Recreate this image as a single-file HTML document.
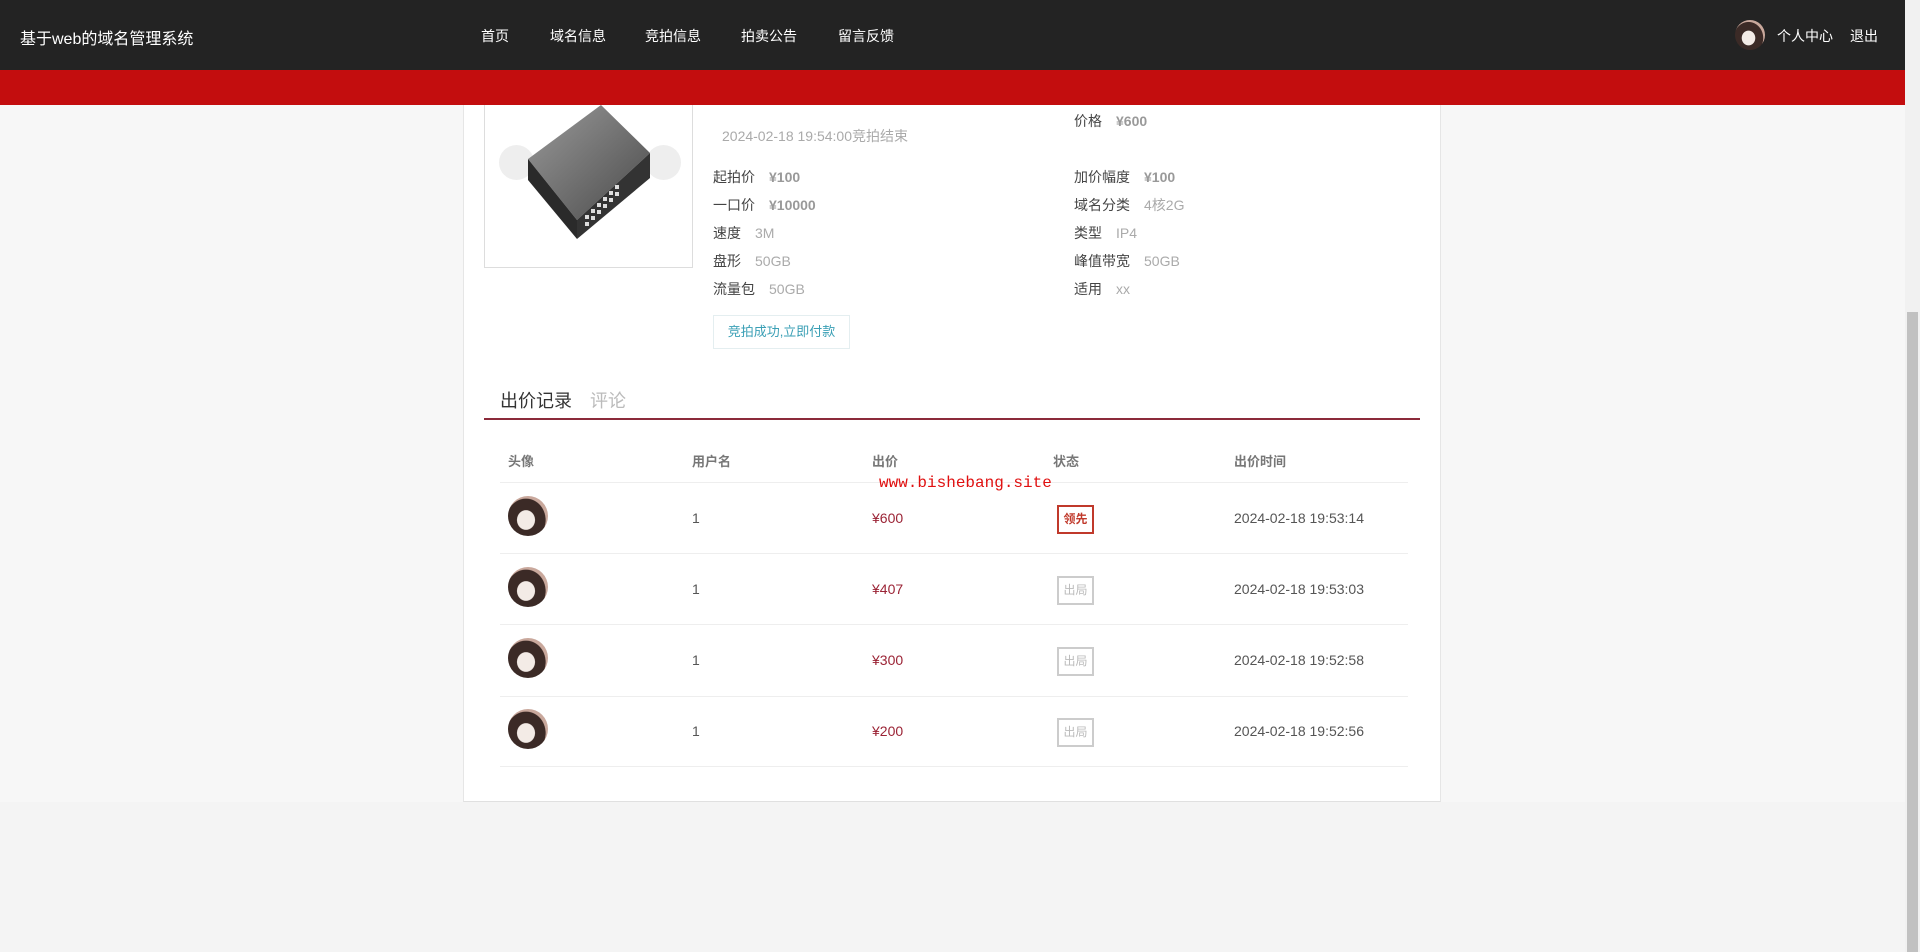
<!DOCTYPE html>
<html><head><meta charset="utf-8"><style>
*{margin:0;padding:0;box-sizing:border-box}
body{width:1920px;height:952px;overflow:hidden;background:#f4f4f4;font-family:"Liberation Sans","Noto Sans CJK SC",sans-serif;position:relative;color:#333}
.hdr{position:absolute;left:0;top:0;width:1905px;height:70px;background:#232323;color:#fff}
.red{position:absolute;left:0;top:70px;width:1905px;height:35px;background:#c30d0e}
.abs{position:absolute;white-space:nowrap}
.pg{position:absolute;left:0;top:105px;width:1905px;height:697px;background:#f7f7f7}
.box{position:absolute;left:463px;top:105px;width:978px;height:697px;background:#fff;border-left:1px solid #e6e6e6;border-right:1px solid #e6e6e6;border-bottom:1px solid #e0e0e0}
.lab{font-size:14px;color:#444}
.val{font-size:14px;color:#aaa;margin-left:14px}
.b{font-weight:bold;color:#999}
.av{width:40px;height:40px;border-radius:50%;background:radial-gradient(ellipse at 45% 60%,#f3ebe6 0 28%,#3b2a26 30% 62%,#c9a89c 64%);position:absolute}
.th{font-size:13px;color:#777;font-weight:bold}
.td{font-size:14px;color:#555}
.pr{font-size:14px;color:#9b2335}
.bd{position:absolute;width:37px;height:29px;border:2px solid #ccc;font-size:12px;color:#bbb;text-align:center;line-height:25px}
.ln{position:absolute;left:500px;width:908px;height:1px;background:#eee}
</style></head><body>
<div class="hdr">
<div class="abs" style="left:20px;top:25px;font-size:16px">基于web的域名管理系统</div>
<div class="abs" style="left:481px;top:26px;font-size:14px">首页</div>
<div class="abs" style="left:550px;top:26px;font-size:14px">域名信息</div>
<div class="abs" style="left:645px;top:26px;font-size:14px">竞拍信息</div>
<div class="abs" style="left:741px;top:26px;font-size:14px">拍卖公告</div>
<div class="abs" style="left:838px;top:26px;font-size:14px">留言反馈</div>
<div class="av" style="left:1735px;top:20px;width:30px;height:30px"></div>
<div class="abs" style="left:1777px;top:26px;font-size:14px">个人中心</div>
<div class="abs" style="left:1850px;top:26px;font-size:14px">退出</div>
</div>
<div class="red"></div>
<div class="pg"></div>
<div class="box"></div>
<div style="position:absolute;left:1905px;top:0;width:15px;height:952px;background:#f1f1f1"></div>
<div style="position:absolute;left:1907px;top:312px;width:11px;height:640px;background:#c1c1c1"></div>
<div style="position:absolute;left:0;top:803px;width:1905px;height:149px;background:#f4f4f4"></div>
<div style="position:absolute;left:484px;top:105px;width:209px;height:163px;border:1px solid #ddd;border-top:none;background:#fff;overflow:hidden">
<div style="position:absolute;left:14px;top:40px;width:35px;height:35px;border-radius:50%;background:#eee"></div>
<div style="position:absolute;left:161px;top:40px;width:35px;height:35px;border-radius:50%;background:#eee"></div>
<svg width="209" height="163" style="position:absolute;left:0;top:0">
<defs><linearGradient id="g" x1="0" y1="0" x2="1" y2="1"><stop offset="0" stop-color="#9a9a9a"/><stop offset="1" stop-color="#4a4a4a"/></linearGradient></defs>
<polygon points="43,54 116,0 165,48 92,115" fill="url(#g)"/>
<polygon points="43,54 92,115 92,134 43,75" fill="#2a2a2a"/>
<polygon points="92,115 165,48 165,73 92,134" fill="#333"/>
<g fill="#ddd"><rect x="100" y="110" width="4" height="4"/><rect x="106" y="104" width="4" height="4"/><rect x="112" y="98" width="4" height="4"/><rect x="118" y="92" width="4" height="4"/><rect x="124" y="86" width="4" height="4"/><rect x="130" y="80" width="4" height="4"/><rect x="100" y="117" width="4" height="4"/><rect x="106" y="111" width="4" height="4"/><rect x="112" y="105" width="4" height="4"/><rect x="118" y="99" width="4" height="4"/><rect x="124" y="93" width="4" height="4"/><rect x="130" y="87" width="4" height="4"/></g>
</svg>
</div>
<div class="abs" style="left:722px;top:126px;font-size:14px;color:#aaa">2024-02-18 19:54:00竞拍结束</div>
<div class="abs" style="left:1074px;top:111px"><span class="lab">价格</span><span class="val b">¥600</span></div>
<div class="abs" style="left:713px;top:167px"><span class="lab">起拍价</span><span class="val b">¥100</span></div>
<div class="abs" style="left:713px;top:195px"><span class="lab">一口价</span><span class="val b">¥10000</span></div>
<div class="abs" style="left:713px;top:223px"><span class="lab">速度</span><span class="val">3M</span></div>
<div class="abs" style="left:713px;top:251px"><span class="lab">盘形</span><span class="val">50GB</span></div>
<div class="abs" style="left:713px;top:279px"><span class="lab">流量包</span><span class="val">50GB</span></div>
<div class="abs" style="left:1074px;top:167px"><span class="lab">加价幅度</span><span class="val b">¥100</span></div>
<div class="abs" style="left:1074px;top:195px"><span class="lab">域名分类</span><span class="val">4核2G</span></div>
<div class="abs" style="left:1074px;top:223px"><span class="lab">类型</span><span class="val">IP4</span></div>
<div class="abs" style="left:1074px;top:251px"><span class="lab">峰值带宽</span><span class="val">50GB</span></div>
<div class="abs" style="left:1074px;top:279px"><span class="lab">适用</span><span class="val">xx</span></div>
<div class="abs" style="left:713px;top:315px;width:137px;height:34px;border:1px solid #e4eef0;font-size:13px;color:#3a9fb5;line-height:32px;text-align:center">竞拍成功,立即付款</div>
<div class="abs" style="left:500px;top:387px;font-size:18px;color:#333">出价记录</div>
<div class="abs" style="left:590px;top:387px;font-size:18px;color:#bbb">评论</div>
<div style="position:absolute;left:484px;top:418px;width:936px;height:2px;background:#8b2a3a"></div>
<div class="abs th" style="left:508px;top:451px">头像</div>
<div class="abs th" style="left:692px;top:451px">用户名</div>
<div class="abs th" style="left:872px;top:451px">出价</div>
<div class="abs th" style="left:1053px;top:451px">状态</div>
<div class="abs th" style="left:1234px;top:451px">出价时间</div>
<div class="ln" style="top:482px"></div>
<div class="ln" style="top:553px"></div>
<div class="ln" style="top:624px"></div>
<div class="ln" style="top:696px"></div>
<div class="ln" style="top:766px"></div>
<div class="av" style="left:508px;top:496px"></div>
<div class="av" style="left:508px;top:567px"></div>
<div class="av" style="left:508px;top:638px"></div>
<div class="av" style="left:508px;top:709px"></div>
<div class="abs td" style="left:692px;top:510px">1</div>
<div class="abs td" style="left:692px;top:581px">1</div>
<div class="abs td" style="left:692px;top:652px">1</div>
<div class="abs td" style="left:692px;top:723px">1</div>
<div class="abs pr" style="left:872px;top:510px">¥600</div>
<div class="abs pr" style="left:872px;top:581px">¥407</div>
<div class="abs pr" style="left:872px;top:652px">¥300</div>
<div class="abs pr" style="left:872px;top:723px">¥200</div>
<div class="bd" style="left:1057px;top:505px;border-color:#c0392b;color:#c0392b;font-weight:bold">领先</div>
<div class="bd" style="left:1057px;top:576px">出局</div>
<div class="bd" style="left:1057px;top:647px">出局</div>
<div class="bd" style="left:1057px;top:718px">出局</div>
<div class="abs td" style="left:1234px;top:510px">2024-02-18 19:53:14</div>
<div class="abs td" style="left:1234px;top:581px">2024-02-18 19:53:03</div>
<div class="abs td" style="left:1234px;top:652px">2024-02-18 19:52:58</div>
<div class="abs td" style="left:1234px;top:723px">2024-02-18 19:52:56</div>
<div class="abs" style="left:879px;top:474px;font-family:'Liberation Mono',monospace;font-size:16px;color:#e01010">www.bishebang.site</div>
</body></html>
